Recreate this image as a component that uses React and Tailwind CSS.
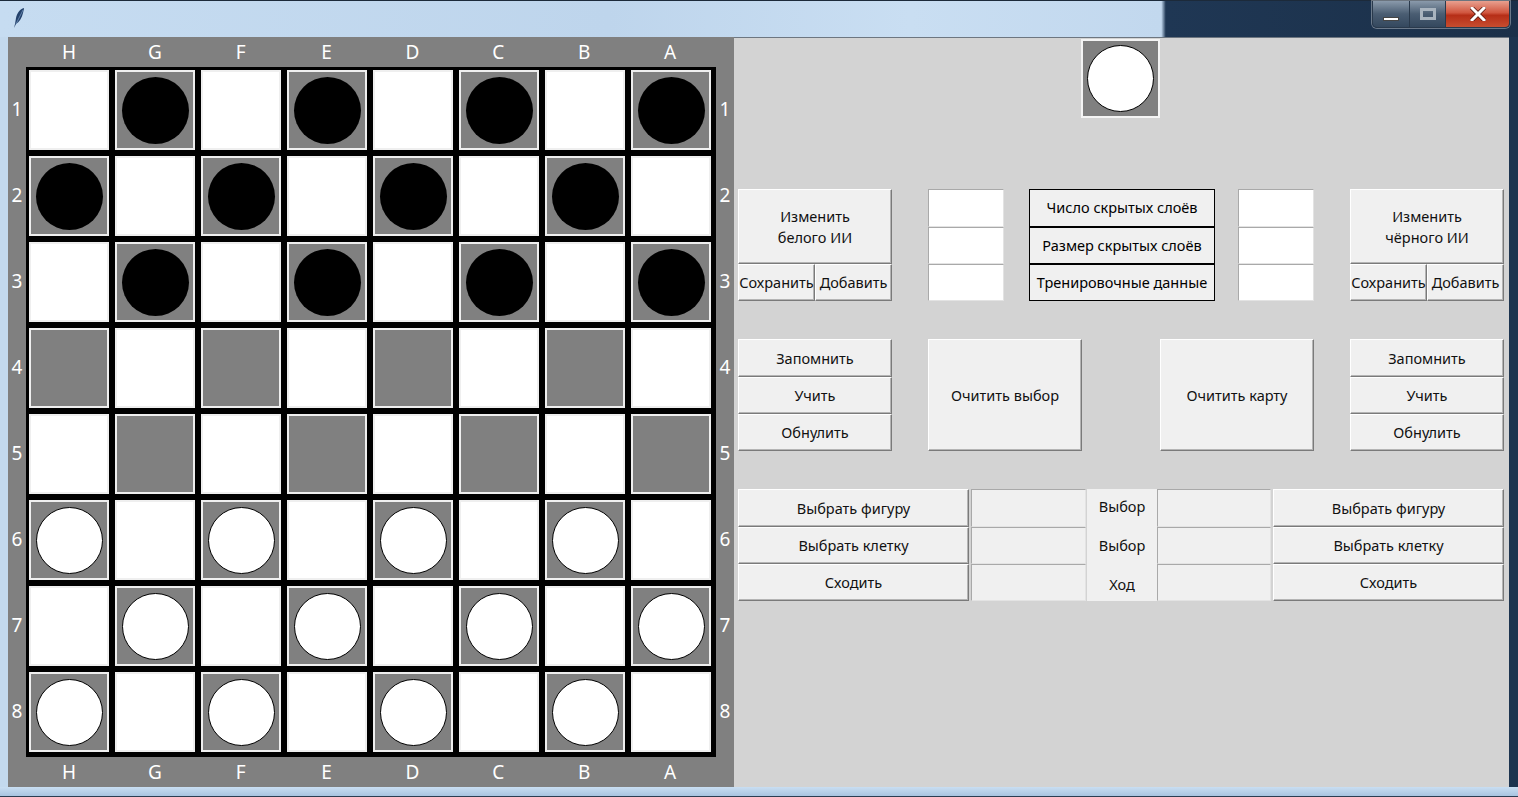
import React from 'react';

const FILES = ['H', 'G', 'F', 'E', 'D', 'C', 'B', 'A'];
const RANKS = [1, 2, 3, 4, 5, 6, 7, 8];

const Piece = ({ color }) =>
  color === 'b'
    ? <div className="w-[67px] h-[67px] rounded-full bg-black" />
    : <div className="w-[67px] h-[67px] rounded-full bg-white border border-black" />

const Cell = ({ dark, piece }) => (
  <div className={`w-[80px] h-[80px] border-2 border-[#efefef] flex items-center justify-center ${dark ? 'bg-[#808080]' : 'bg-white'}`}>
    {piece && <Piece color={piece} />}
  </div>
)

const FileRow = () => (
  <div className="flex items-center pl-[3px]">
    {FILES.map(f => (
      <span key={f} className="w-[80px] mr-[6px] text-center">{f}</span>
    ))}
  </div>
)

const RankCol = () => (
  <div className="flex flex-col pt-[3px]">
    {RANKS.map(r => (
      <span key={r} className="h-[80px] mb-[6px] flex items-center justify-center">{r}</span>
    ))}
  </div>
)

const Board = () => (
  <div className="w-[690px] h-[690px] bg-black pt-[3px] pl-[3px] grid grid-cols-[repeat(8,80px)] grid-rows-[repeat(8,80px)] gap-[6px]">
    {RANKS.map((_, r) =>
      FILES.map((_, c) => {
        const dark = (r + c) % 2 === 1
        let piece = null
        if (dark && r < 3) piece = 'b'
        if (dark && r > 4) piece = 'w'
        return <Cell key={`${r}-${c}`} dark={dark} piece={piece} />
      })
    )}
  </div>
)

const Btn = ({ className = '', children }) => (
  <button className={`flex items-center justify-center text-center leading-[21px] text-[#111] bg-[#f0f0f0] border border-t-white border-l-white border-r-[#7a7a7a] border-b-[#7a7a7a] shadow-[inset_-1px_-1px_0_#b4b4b4] ${className}`}>
    {children}
  </button>
)

const Entry = ({ className = '' }) => (
  <div className={`border border-[#a9a9a9] border-b-[#e3e3e3] border-r-[#e3e3e3] ${className}`} />
)

const Stack3 = ({ children, className = '' }) => (
  <div className={`flex flex-col ${className}`}>{children}</div>
)

const AiBlock = ({ title }) => (
  <div className="w-[154px] flex flex-col">
    <Btn className="h-[75px]">{title}</Btn>
    <div className="flex h-[37px]">
      <Btn className="w-[77px]">Сохранить</Btn>
      <Btn className="w-[77px]">Добавить</Btn>
    </div>
  </div>
)

const TrainBlock = () => (
  <Stack3 className="w-[154px]">
    <Btn className="h-[38px]">Запомнить</Btn>
    <Btn className="h-[37px]">Учить</Btn>
    <Btn className="h-[37px]">Обнулить</Btn>
  </Stack3>
)

const MoveBlock = () => (
  <Stack3 className="w-[231px]">
    <Btn className="h-[38px]">Выбрать фигуру</Btn>
    <Btn className="h-[37px]">Выбрать клетку</Btn>
    <Btn className="h-[37px]">Сходить</Btn>
  </Stack3>
)

const WhiteEntries = () => (
  <Stack3 className="w-[76px]">
    <Entry className="h-[38px] bg-white" />
    <Entry className="h-[37px] bg-white" />
    <Entry className="h-[37px] bg-white" />
  </Stack3>
)

const GreyEntries = ({ w }) => (
  <Stack3 className={w}>
    <Entry className="h-[38px] bg-[#f0f0f0]" />
    <Entry className="h-[37px] bg-[#f0f0f0]" />
    <Entry className="h-[37px] bg-[#f0f0f0]" />
  </Stack3>
)

const Feather = () => (
  <svg width="12" height="22" viewBox="0 0 12 22">
    <path d="M11 1 C7 2 4 6 3 11 L2 17 L1 21 L3 17 C6 15 9 11 10 6 C10.5 4 11 2 11 1 Z" fill="#23416b" />
    <path d="M10 3 L3 17" stroke="#7fa0c8" strokeWidth="0.7" />
  </svg>
)

const WindowButtons = () => (
  <div className="flex h-[27px] mr-[8px] rounded-b-[5px] overflow-hidden border border-t-0 border-[#2a3a4c] shadow-[0_0_0_1px_rgba(255,255,255,0.35)]">
    <div className="w-[37px] flex items-end justify-center pb-[6px] bg-[linear-gradient(180deg,#8a9aab_0%,#4a5d72_50%,#34485e_100%)] border-r border-[#2a3a4c]">
      <div className="w-[16px] h-[4px] bg-white border border-[#444]" />
    </div>
    <div className="w-[36px] flex items-center justify-center bg-[linear-gradient(180deg,#8a9aab_0%,#4a5d72_50%,#34485e_100%)] border-r border-[#2a3a4c]">
      <div className="w-[16px] h-[12px] border-[3px] border-[#a9b4bf] bg-transparent" />
    </div>
    <div className="w-[63px] flex items-center justify-center bg-[linear-gradient(180deg,#e8a08f_0%,#d0563f_45%,#b62e17_55%,#c74d2f_100%)]">
      <svg width="16" height="14" viewBox="0 0 16 14">
        <path d="M2 1 L14 13 M14 1 L2 13" stroke="#5a1a10" strokeWidth="4.5" strokeLinecap="square" />
        <path d="M2 1 L14 13 M14 1 L2 13" stroke="#ffffff" strokeWidth="3" strokeLinecap="square" />
      </svg>
    </div>
  </div>
)

export default function App() {
  return (
    <div className="w-[1518px] h-[797px] overflow-hidden flex flex-col bg-[#bcd3ea] font-['Noto_Sans',sans-serif]">
      <div className="h-[37px] flex items-start justify-between border-t border-[#1c2a3a] bg-[linear-gradient(90deg,#c6dcf1_0%,#bed5ec_40%,#c9def2_60%,#c2d8ee_76.5%,#1f3754_76.8%,#1b3049_100%)]">
        <div className="pl-[13px] pt-[6px]"><Feather /></div>
        <WindowButtons />
      </div>

      <div className="flex h-[750px] pl-[8px] pr-[9px] bg-[linear-gradient(90deg,#c3d9ee_0%,#c3d9ee_99%,#1d344f_99.4%)]">
        <div className="w-[726px] bg-[#808080] grid grid-cols-[18px_690px_18px] grid-rows-[30px_690px_30px] text-white text-[19px] leading-none">
          <div />
          <FileRow />
          <div />
          <RankCol />
          <Board />
          <RankCol />
          <div />
          <FileRow />
          <div />
        </div>

        <div className="flex-1 bg-[#d3d3d3] border-t border-[#6d7680] pl-[4px] pt-[1px] flex flex-col text-[14.5px]">
          <div className="ml-[343px] w-[79px] h-[79px] bg-[#808080] border-2 border-[#f4f4f4] flex items-center justify-center">
            <Piece color="w" />
          </div>

          <div className="flex h-[112px] mt-[71px]">
            <AiBlock title={<>Изменить<br />белого ИИ</>} />
            <div className="w-[36px]" />
            <WhiteEntries />
            <div className="w-[25px]" />
            <Stack3 className="w-[186px]">
              <div className="h-[38px] flex items-center justify-center bg-[#f0f0f0] border border-black">Число скрытых слоёв</div>
              <div className="h-[37px] flex items-center justify-center bg-[#f0f0f0] border border-black">Размер скрытых слоёв</div>
              <div className="h-[37px] flex items-center justify-center bg-[#f0f0f0] border border-black">Тренировочные данные</div>
            </Stack3>
            <div className="w-[23px]" />
            <WhiteEntries />
            <div className="w-[36px]" />
            <AiBlock title={<>Изменить<br />чёрного ИИ</>} />
          </div>

          <div className="flex h-[112px] mt-[38px]">
            <TrainBlock />
            <div className="w-[36px]" />
            <Btn className="w-[154px]">Очитить выбор</Btn>
            <div className="w-[78px]" />
            <Btn className="w-[154px]">Очитить карту</Btn>
            <div className="w-[36px]" />
            <TrainBlock />
          </div>

          <div className="flex h-[112px] mt-[38px]">
            <MoveBlock />
            <div className="w-[2px]" />
            <GreyEntries w="w-[115px]" />
            <div className="w-[1px]" />
            <div className="w-[70px] flex flex-col bg-[#f0f0f0] text-[#111]">
              <div className="h-[38px] flex items-center justify-center pb-[2px]">Выбор</div>
              <div className="h-[37px] flex items-center justify-center">Выбор</div>
              <div className="h-[37px] flex items-center justify-center pt-[4px]">Ход</div>
            </div>
            <GreyEntries w="w-[114px]" />
            <div className="w-[2px]" />
            <MoveBlock />
          </div>
        </div>
      </div>

      <div className="flex-1 border-b border-[#2b3d52] bg-[linear-gradient(180deg,#c9def2,#a9c4e0)]" />
    </div>
  )
}
